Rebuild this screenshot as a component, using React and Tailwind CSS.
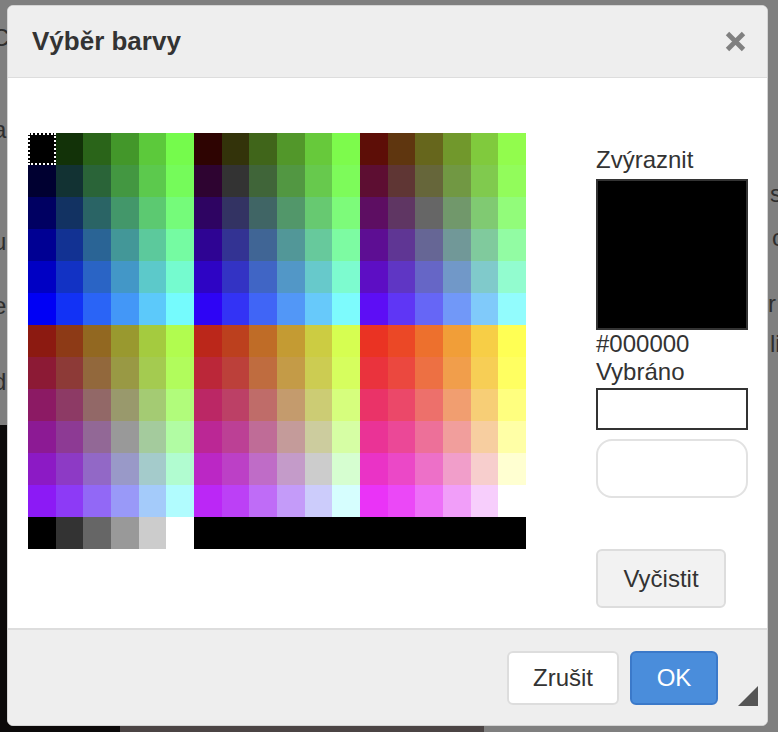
import React from 'react';

// sRGB -> Display P3 (the reference was captured on a P3 screen)
const lin = (c) => (c <= 0.04045 ? c / 12.92 : Math.pow((c + 0.055) / 1.055, 2.4));
const enc = (c) => (c <= 0.0031308 ? 12.92 * c : 1.055 * Math.pow(c, 1 / 2.4) - 0.055);

function toP3(r, g, b) {
  const R = lin(r / 255);
  const G = lin(g / 255);
  const B = lin(b / 255);
  const pr = 0.8224621 * R + 0.177538 * G;
  const pg = 0.0331941 * R + 0.9668058 * G;
  const pb = 0.0170827 * R + 0.0723974 * G + 0.9105199 * B;
  const h = (v) =>
    Math.round(Math.min(1, Math.max(0, enc(v))) * 255)
      .toString(16)
      .padStart(2, '0');
  return `#${h(pr)}${h(pg)}${h(pb)}`;
}

const STEPS = [0, 51, 102, 153, 204, 255];

// 12 rows x 18 cols web palette + a row of greys
function buildPalette() {
  const rows = [];
  for (let half = 0; half < 2; half++) {
    for (let b = 0; b < 6; b++) {
      const row = [];
      for (let block = 0; block < 3; block++) {
        const r = STEPS[half * 3 + block];
        for (let g = 0; g < 6; g++) row.push(toP3(r, STEPS[g], STEPS[b]));
      }
      rows.push(row);
    }
  }
  const greys = ['#000000', '#333333', '#666666', '#999999', '#cccccc', '#ffffff'];
  rows.push([...greys, ...Array(12).fill('#000000')]);
  return rows;
}

const palette = buildPalette();

const font = { fontFamily: '"Liberation Sans", Arial, Helvetica, sans-serif' };

function CloseIcon() {
  return (
    <svg width="21" height="21" viewBox="0 0 21 21">
      <path d="M2.5 2.5 L18.5 18.5 M18.5 2.5 L2.5 18.5" stroke="#808080" strokeWidth="4.8" />
    </svg>
  );
}

function ColorGrid() {
  return (
    <div className="grid w-[498px] self-start grid-cols-[repeat(18,minmax(0,1fr))] auto-rows-[32px]">
      {palette.flat().map((c, i) => (
        <div
          key={i}
          className={
            i === 0
              ? 'h-[32px] outline-2 outline-dotted outline-white -outline-offset-2'
              : 'h-[32px]'
          }
          style={{ backgroundColor: c }}
        />
      ))}
    </div>
  );
}

export default function App() {
  return (
    <div className="relative h-[732px] w-[778px] overflow-hidden bg-[#7f7f7f] text-[#333]" style={font}>
      {/* page behind the overlay */}
      <div className="absolute left-0 top-[425px] h-[307px] w-[120px] bg-[#0c0a0a]" />
      <div className="absolute left-[120px] top-[700px] h-[32px] w-[364px] bg-[#4b4444]" />
      <span className="absolute left-[-8px] top-[20px] text-[24px] text-[#2e2e2e]">C</span>
      <span className="absolute left-[-7px] top-[112px] text-[24px] text-[#2e2e2e]">a</span>
      <span className="absolute left-[-7px] top-[224px] text-[24px] text-[#2e2e2e]">u</span>
      <span className="absolute left-[-7px] top-[288px] text-[24px] text-[#2e2e2e]">e</span>
      <span className="absolute left-[-7px] top-[364px] text-[24px] text-[#2e2e2e]">d</span>
      <span className="absolute left-[770px] top-[176px] text-[24px] text-[#2e2e2e]">s</span>
      <span className="absolute left-[772px] top-[220px] text-[24px] text-[#2e2e2e]">c</span>
      <span className="absolute left-[768px] top-[286px] text-[24px] text-[#2e2e2e]">r</span>
      <span className="absolute left-[770px] top-[326px] text-[24px] text-[#2e2e2e]">li</span>

      {/* dialog */}
      <div className="absolute left-[7px] top-[5px] flex h-[721px] w-[761px] flex-col overflow-hidden rounded-[6px] border border-[#d4d4d4] bg-white">
        <div className="flex h-[72px] shrink-0 items-center justify-between border-b border-[#dddddd] bg-[#eeeeee] pl-[24px] pr-[21px]">
          <h1 className="text-[26px] font-bold">Výběr barvy</h1>
          <CloseIcon />
        </div>

        <div className="flex flex-1 items-start pl-[20px] pt-[55px]">
          <ColorGrid />
          <div className="ml-[70px] mt-[13px] flex w-[152px] flex-col text-[24px] leading-[28px]">
            <div className="mb-[5px]">Zvýraznit</div>
            <div className="h-[151px] border-2 border-[#333] bg-black" />
            <div>#000000</div>
            <div>Vybráno</div>
            <div className="mt-[2px] h-[42px] border-2 border-[#333] bg-white" />
            <div className="mt-[9px] h-[59px] rounded-[16px] border-2 border-[#e2e2e2]" />
            <button className="mt-[51px] h-[59px] w-[130px] rounded-[6px] border-2 border-[#dddddd] bg-[#f2f2f2] text-[24px]">
              Vyčistit
            </button>
          </div>
        </div>

        <div className="relative flex h-[97px] shrink-0 items-center justify-end gap-[11px] border-t-2 border-[#dddddd] bg-[#eeeeee] pr-[49px]">
          <button className="h-[54px] w-[112px] rounded-[6px] border-2 border-[#dddddd] bg-white text-[24px]">
            Zrušit
          </button>
          <button className="h-[54px] w-[88px] rounded-[6px] border-2 border-[#3b79c9] bg-[#4a8ddb] text-[24px] text-white">
            OK
          </button>
          <div className="absolute bottom-[19px] right-[9px] h-0 w-0 border-b-[20px] border-l-[20px] border-b-[#555] border-l-transparent" />
        </div>
      </div>
    </div>
  );
}
